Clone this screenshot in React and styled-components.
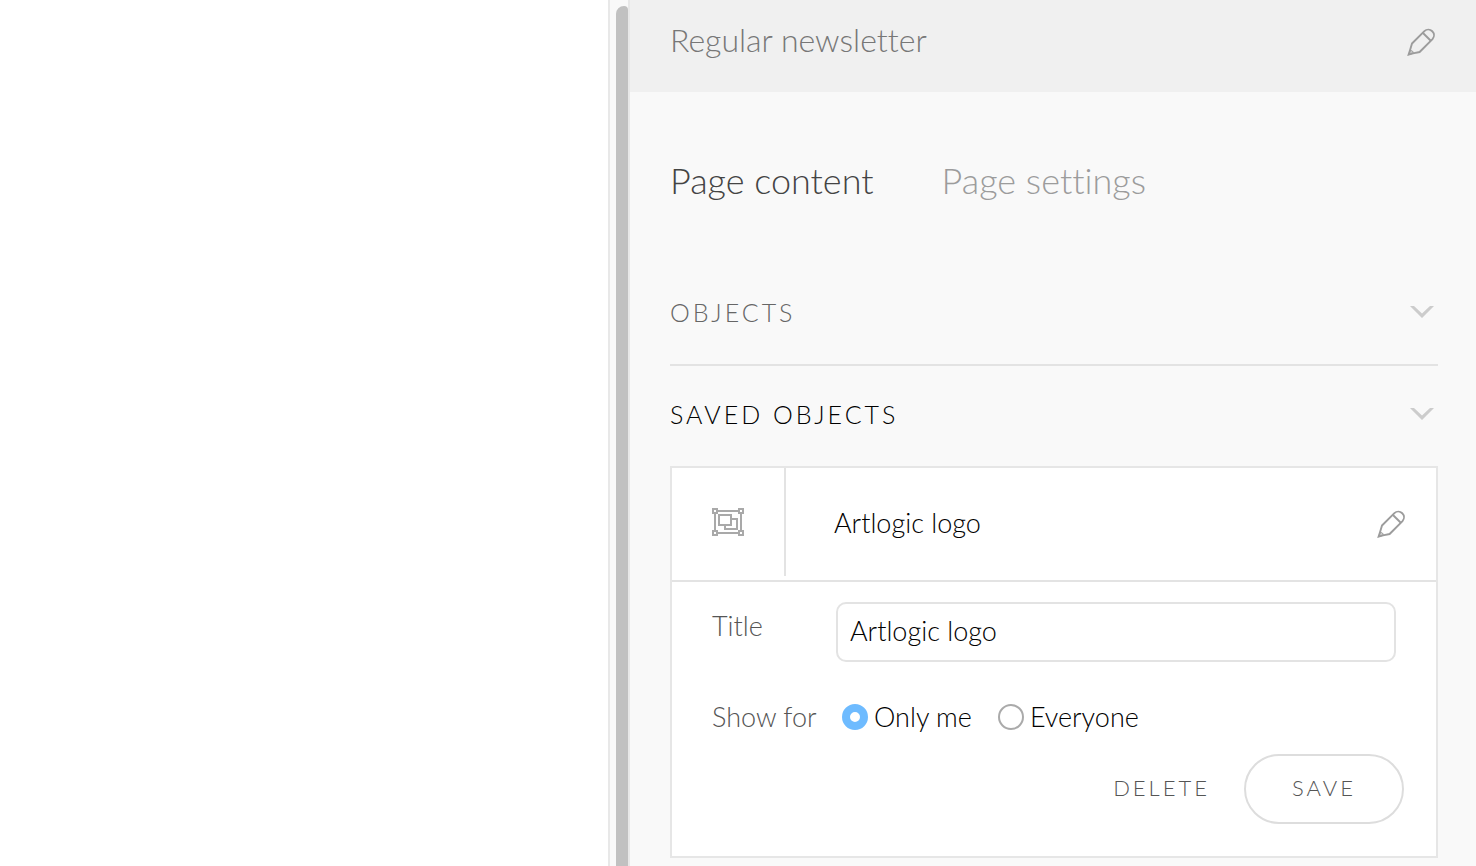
import React, { useState } from 'react';
import styled, { createGlobalStyle } from 'styled-components';

const PencilIcon = () => (
  <svg width="30" height="30" viewBox="-1 0 30 30" fill="none" stroke="#9c9c9c" strokeWidth="1.9" aria-hidden="true">
    <path d="M5 16.5 L17.4 4.1 A5.7 5.7 0 0 1 25.5 12.1 L12.6 25 L6 26.3 L1.6 27.6 L3 23.2 Z" />
    <path d="M15.7 5.8 L23.8 13.8" />
    <path d="M3.2 23.4 C5 23.2 6.4 24.4 6.2 26.2 L1.6 27.8 Z" fill="#9c9c9c" fillOpacity="0.5" strokeWidth="1" />
  </svg>
);

const ChevronIcon = () => (
  <svg width="24" height="12" viewBox="0 0 24 12" fill="#cccccc" aria-hidden="true">
    <path d="M0 0 H4 L12 7.6 L20 0 H24 L12 12 Z" />
  </svg>
);

const GroupIcon = () => (
  <svg width="32" height="28" viewBox="0 0 32 28" fill="none" stroke="#a9a9a9" strokeWidth="2" aria-hidden="true">
    <path d="M6 3 H26 M6 25 H26 M3 6 V22 M29 6 V22" />
    <path d="M1 1 H5 V5 H1 Z M27 1 H31 V5 H27 Z M1 23 H5 V27 H1 Z M27 23 H31 V27 H27 Z" />
    <path d="M7 7 H19 V17 H7 Z" />
    <path d="M20 11 H25 V21 H13 V18" />
  </svg>
);

const App = () => {
  const [tab, setTab] = useState('content');
  const [title, setTitle] = useState('Artlogic logo');
  const [showFor, setShowFor] = useState('me');

  return (
    <Page>
      <GlobalStyle />
      <Preview />
      <ScrollTrack>
        <ScrollThumb />
      </ScrollTrack>
      <Panel>
        <PanelHeader>
          <PanelTitle>Regular newsletter</PanelTitle>
          <IconButton aria-label="Edit newsletter">
            <PencilIcon />
          </IconButton>
        </PanelHeader>
        <PanelBody>
          <Tabs>
            <Tab $active={tab === 'content'} onClick={() => setTab('content')}>
              Page content
            </Tab>
            <Tab $active={tab === 'settings'} onClick={() => setTab('settings')}>
              Page settings
            </Tab>
          </Tabs>
          <SectionToggle $divider>
            Objects
            <ChevronIcon />
          </SectionToggle>
          <SectionToggle $active>
            Saved objects
            <ChevronIcon />
          </SectionToggle>
          <Card>
            <CardHeader>
              <CardIcon>
                <GroupIcon />
              </CardIcon>
              <CardName>Artlogic logo</CardName>
              <IconButton aria-label="Edit Artlogic logo">
                <PencilIcon />
              </IconButton>
            </CardHeader>
            <Form onSubmit={(e) => e.preventDefault()}>
              <Field>
                <FieldLabel htmlFor="title">Title</FieldLabel>
                <TextInput id="title" value={title} onChange={(e) => setTitle(e.target.value)} />
              </Field>
              <RadioField role="radiogroup" aria-labelledby="show-for">
                <GroupLabel id="show-for">Show for</GroupLabel>
                <RadioLabel>
                  <Radio name="show" checked={showFor === 'me'} onChange={() => setShowFor('me')} />
                  Only me
                </RadioLabel>
                <RadioLabel>
                  <Radio name="show" checked={showFor === 'all'} onChange={() => setShowFor('all')} />
                  Everyone
                </RadioLabel>
              </RadioField>
              <Actions>
                <DeleteButton type="button">Delete</DeleteButton>
                <SaveButton type="submit">Save</SaveButton>
              </Actions>
            </Form>
          </Card>
        </PanelBody>
      </Panel>
    </Page>
  );
};

export default App;

const GlobalStyle = createGlobalStyle`
  * {
    box-sizing: border-box;
  }

  body {
    margin: 0;
    background-color: #ffffff;
  }

  body, button, input {
    font-family: Lato, 'Open Sans', sans-serif;
    font-weight: 300;
    font-variant-ligatures: none;
  }

  button {
    padding: 0;
    border: none;
    background: none;
    cursor: pointer;
  }
`;

const Page = styled.div`
  display: flex;
  min-height: 100vh;
`;

const Preview = styled.main`
  flex: 1;
  background-color: #ffffff;
`;

const ScrollTrack = styled.div`
  display: flex;
  flex: none;
  width: 20px;
  padding: 6px 0 0 6px;
  border-left: 2px solid #e8e8e8;
  background-color: #f9f9f9;
`;

const ScrollThumb = styled.div`
  flex: 1;
  border-radius: 8px 4px 0 0;
  background-color: #c1c1c1;
`;

const Panel = styled.aside`
  flex: 0 1 848px;
  border-left: 2px solid #e8e8e8;
  background-color: #f9f9f9;
`;

const PanelHeader = styled.header`
  display: flex;
  justify-content: space-between;
  align-items: center;
  padding: 20px 40px 28px;
  background-color: #f0f0f0;
`;

const PanelTitle = styled.h1`
  margin: 0;
  padding-bottom: 4px;
  font-size: 32px;
  font-weight: 300;
  line-height: 40px;
  color: #777777;
`;

const IconButton = styled.button`
  display: flex;
`;

const PanelBody = styled.div`
  padding: 0 38px 8px 40px;
`;

const Tabs = styled.nav`
  display: flex;
  gap: 68px;
  padding: 64px 0 60px;
`;

const Tab = styled.button`
  font-size: 36px;
  line-height: 48px;
  color: ${({ $active }) => ($active ? '#444444' : '#9c9c9c')};
`;

const SectionToggle = styled.button`
  display: flex;
  justify-content: space-between;
  align-items: center;
  width: 100%;
  height: ${({ $divider }) => ($divider ? '102px' : '100px')};
  padding: 0 4px 4px 0;
  border-bottom: ${({ $divider }) => ($divider ? '2px solid #e3e3e3' : 'none')};
  font-size: 25px;
  letter-spacing: 3px;
  text-transform: uppercase;
  color: ${({ $active }) => ($active ? '#000000' : '#666666')};
`;

const Card = styled.section`
  border: 2px solid #e6e6e6;
  background-color: #ffffff;
`;

const CardHeader = styled.div`
  display: flex;
  align-items: center;
  height: 114px;
  padding-right: 30px;
  border-bottom: 2px solid #e3e3e3;
`;

const CardIcon = styled.div`
  display: flex;
  justify-content: center;
  align-items: center;
  align-self: flex-start;
  width: 114px;
  height: 108px;
  border-right: 2px solid #e3e3e3;
`;

const CardName = styled.h2`
  flex: 1;
  margin: 0;
  padding: 0 0 4px 48px;
  font-size: 27px;
  font-weight: 300;
  color: #000000;
`;

const Form = styled.form`
  padding: 20px 32px 32px 40px;
`;

const Field = styled.div`
  display: flex;
  padding-right: 8px;
`;

const FieldLabel = styled.label`
  flex: 0 0 124px;
  font-size: 27px;
  line-height: 48px;
  color: #555555;
`;

const TextInput = styled.input`
  flex: 1;
  min-width: 0;
  height: 60px;
  padding: 0 12px 4px;
  border: 2px solid #e3e3e3;
  border-radius: 10px;
  background-color: #ffffff;
  font-size: 27px;
  color: #000000;
  outline: none;
`;

const RadioField = styled.div`
  display: flex;
  align-items: center;
  margin: 40px 0 22px;
`;

const GroupLabel = styled.span`
  flex: 0 0 130px;
  font-size: 27px;
  line-height: 30px;
  color: #555555;
`;

const RadioLabel = styled.label`
  display: flex;
  align-items: center;
  gap: 6px;
  margin-right: 26px;
  font-size: 27px;
  line-height: 30px;
  color: #000000;
`;

const Radio = styled.input.attrs({ type: 'radio' })`
  appearance: none;
  width: 26px;
  height: 26px;
  margin: 0;
  border: 2px solid #aaaaaa;
  border-radius: 50%;
  background-color: #ffffff;

  &:checked {
    border: 8px solid #6ebbff;
  }
`;

const Actions = styled.div`
  display: flex;
  justify-content: flex-end;
  align-items: center;
  gap: 34px;
`;

const DeleteButton = styled.button`
  padding-bottom: 4px;
  font-size: 22px;
  letter-spacing: 3px;
  text-transform: uppercase;
  color: #555555;
`;

const SaveButton = styled(DeleteButton)`
  width: 160px;
  height: 70px;
  border: 2px solid #dddddd;
  border-radius: 35px;
`;
